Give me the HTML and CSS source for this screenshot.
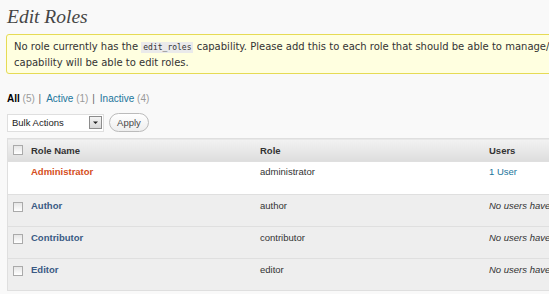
FILE: index.html
```html
<!DOCTYPE html>
<html lang="en">
<head>
    <meta charset="UTF-8">
    <title>Edit Roles</title>
    <link rel="stylesheet" href="styles.css">
</head>
<body>
    <div class="wrap">
        <h2>Edit Roles</h2>

        <div class="notice">
            <p>No role currently has the <code>edit_roles</code> capability. Please add this to each role that should be able to manage/edit roles. If no role has this capability, only users with the <code>delete_users</code><br>capability will be able to edit roles.</p>
        </div>

        <ul class="subsubsub">
            <li><a class="current" href="#">All <span class="count">(5)</span></a> |</li>
            <li><a href="#">Active <span class="count">(1)</span></a> |</li>
            <li><a href="#">Inactive <span class="count">(4)</span></a></li>
        </ul>

        <div class="tablenav">
            <div class="select">
                <span>Bulk Actions</span>
                <span class="arrow">
                    <svg width="7" height="7" viewBox="0 0 7 7"><path d="M1 2.5h5L3.5 5z" fill="#222"/></svg>
                </span>
            </div>
            <button class="button">Apply</button>
        </div>

        <table class="widefat">
            <thead>
                <tr>
                    <th class="check"><span class="cb"></span></th>
                    <th class="col-name">Role Name</th>
                    <th class="col-role">Role</th>
                    <th class="col-users">Users</th>
                </tr>
            </thead>
            <tbody>
                <tr class="active">
                    <td class="check"></td>
                    <td class="col-name"><a class="admin" href="#">Administrator</a></td>
                    <td class="col-role">administrator</td>
                    <td class="col-users"><a class="users" href="#">1 User</a></td>
                </tr>
                <tr class="inactive">
                    <td class="check"><span class="cb"></span></td>
                    <td class="col-name"><a href="#">Author</a></td>
                    <td class="col-role">author</td>
                    <td class="col-users"><em>No users have this role.</em></td>
                </tr>
                <tr class="inactive">
                    <td class="check"><span class="cb"></span></td>
                    <td class="col-name"><a href="#">Contributor</a></td>
                    <td class="col-role">contributor</td>
                    <td class="col-users"><em>No users have this role.</em></td>
                </tr>
                <tr class="inactive">
                    <td class="check"><span class="cb"></span></td>
                    <td class="col-name"><a href="#">Editor</a></td>
                    <td class="col-role">editor</td>
                    <td class="col-users"><em>No users have this role.</em></td>
                </tr>
            </tbody>
        </table>
    </div>
</body>
</html>
```

FILE: styles.css
```css
body {
    margin: 0;
    padding: 0;
    background-color: #f9f9f9;
    font-family: "Liberation Sans", Tahoma, Arial, sans-serif;
    font-size: 9.5px;
    color: #333;
    overflow: hidden;
}
.wrap {
    width: 760px;
    padding: 0 0 0 7px;
}
.wrap h2 {
    margin: 0;
    padding: 4px 0 0 0;
    height: 30px;
    font-family: "Liberation Serif", Georgia, serif;
    font-style: italic;
    font-weight: normal;
    font-size: 19.5px;
    line-height: 26px;
    color: #464646;
}
.notice {
    margin: 0 0 0 -1px;
    padding: 0 7px;
    background-color: #ffffe0;
    border: 1px solid #e6db55;
    border-radius: 3px;
}
.notice p {
    margin: 4px 0 3px;
    font-family: "DejaVu Sans", Verdana, sans-serif;
    font-size: 10px;
    line-height: 15px;
    white-space: nowrap;
    color: #333;
}
.notice code {
    font-family: "DejaVu Sans Mono", monospace;
    font-size: 8px;
    background-color: #eaeaea;
    padding: 1px 2px;
}
.subsubsub {
    list-style: none;
    margin: 18px 0 0;
    padding: 0;
    display: flex;
    gap: 5px;
    color: #666;
    height: 14px;
    line-height: 14px;
    font-size: 10px;
}
.subsubsub li {
    word-spacing: 1px;
}
.subsubsub a {
    color: #21759b;
    text-decoration: none;
    word-spacing: 0;
}
.subsubsub a.current {
    color: #000;
    font-weight: bold;
}
.subsubsub .count {
    color: #999;
    font-weight: normal;
}
.tablenav {
    display: flex;
    align-items: center;
    gap: 5px;
    margin: 6px 0 0;
    height: 21px;
}
.select {
    width: 90px;
    height: 16px;
    border: 1px solid #dfdfdf;
    background-color: #fff;
    display: flex;
    align-items: center;
    justify-content: space-between;
    padding: 0 1px 0 4px;
    color: #222;
}
.select .arrow {
    width: 11px;
    height: 11px;
    border: 1px solid #8c8c8c;
    background: linear-gradient(#f4f4f4, #d8d8d8);
    display: flex;
    align-items: center;
    justify-content: center;
}
.button {
    font-family: "Liberation Sans", Tahoma, Arial, sans-serif;
    font-size: 9.5px;
    color: #464646;
    width: 40px;
    height: 19px;
    padding: 0;
    border: 1px solid #bbb;
    border-radius: 10px;
    background: linear-gradient(#fff, #eee);
}
.widefat {
    margin-top: 5px;
    border-collapse: collapse;
    border: 1px solid #dfdfdf;
    width: 100%;
}
.widefat th, .widefat td {
    text-align: left;
    vertical-align: top;
    border-bottom: 1px solid #dfdfdf;
    padding: 0;
}
.widefat thead th {
    height: 22px;
    vertical-align: middle;
    background: linear-gradient(#f2f2f2, #dddddd);
    color: #333;
    font-weight: bold;
}
.widefat td {
    height: 26px;
    padding-top: 5px;
    color: #333;
}
.widefat tr.active td {
    height: 28px;
    padding-top: 4px;
    background-color: #fff;
}
.widefat .check {
    width: 23px;
}
.widefat .cb {
    display: block;
    width: 8px;
    height: 8px;
    margin: 0 0 0 5px;
    border: 1px solid #aaa;
    background: linear-gradient(#e6e6e6, #fff);
}
.widefat td.check .cb {
    margin-top: 2px;
}
.widefat .col-name {
    width: 229px;
}
.widefat .col-role {
    width: 229px;
}
.widefat .col-name a {
    font-weight: bold;
    color: #3a5a84;
    text-decoration: none;
}
.widefat .col-name a.admin {
    color: #d54e21;
}
.widefat tr.inactive td {
    background-color: #eeeeee;
}
.widefat a.users {
    color: #21759b;
    text-decoration: none;
}
.widefat em {
    color: #333;
}
```
